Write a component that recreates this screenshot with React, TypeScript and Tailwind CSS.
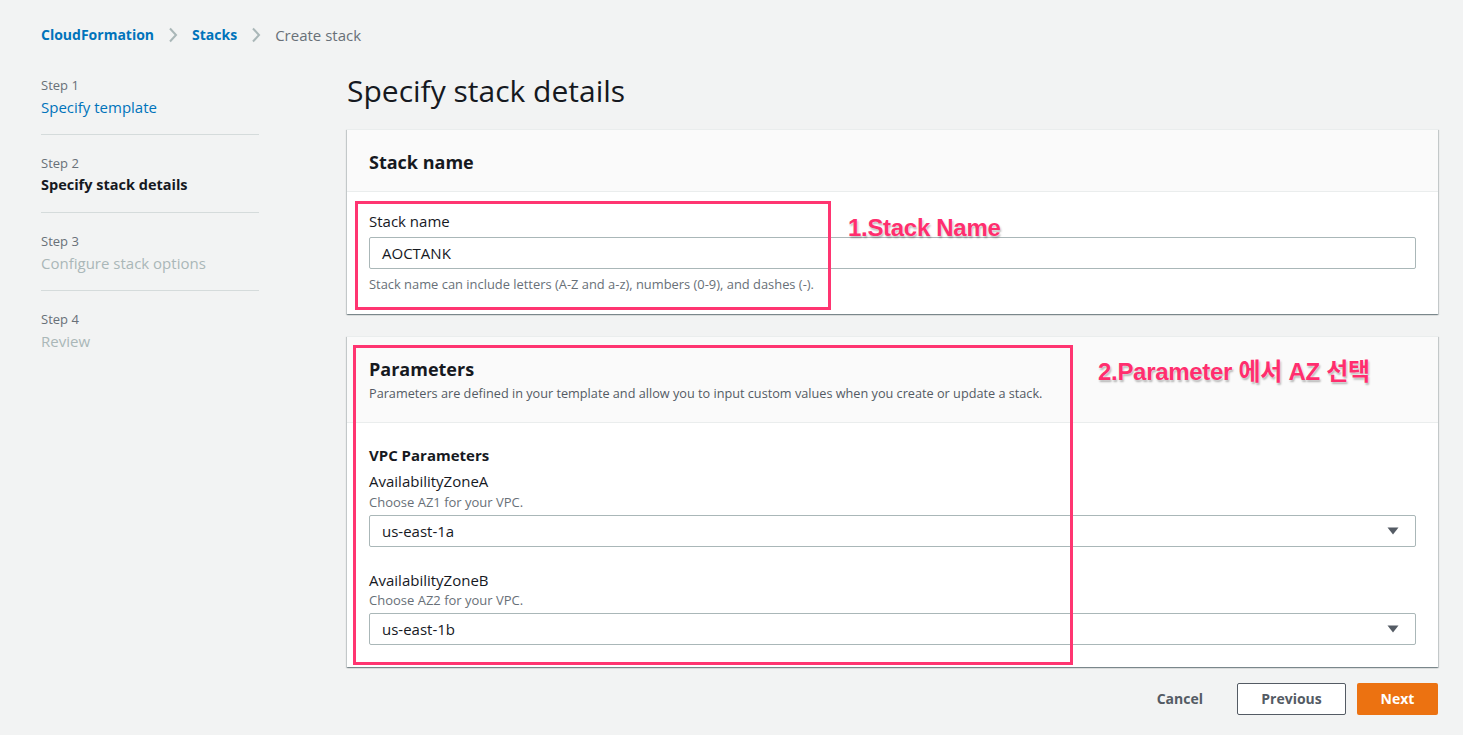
const font = "font-['Open_Sans','Noto_Sans_CJK_KR',sans-serif]"

const steps = [
  { step: 'Step 1', title: 'Specify template', state: 'done' },
  { step: 'Step 2', title: 'Specify stack details', state: 'current' },
  { step: 'Step 3', title: 'Configure stack options', state: 'todo' },
  { step: 'Step 4', title: 'Review', state: 'todo' },
]

function Annotation({ children, className }: { children: React.ReactNode; className: string }) {
  return (
    <div
      className={`absolute whitespace-nowrap font-['Liberation_Sans','Noto_Sans_CJK_KR',sans-serif] text-[24px] font-bold leading-[28px] tracking-[-0.3px] text-[#ff2e6e] [text-shadow:0_0_2px_#fff,1px_2px_2px_rgba(0,0,0,0.3)] ${className}`}
    >
      {children}
    </div>
  )
}

function Crumb() {
  return (
    <svg width="10" height="16" viewBox="0 0 10 16" className="mx-[14px] shrink-0">
      <path d="M2 1.5l6 6.5-6 6.5" fill="none" stroke="#aab7b8" strokeWidth="2" />
    </svg>
  )
}

function Caret() {
  return (
    <svg width="12" height="8" viewBox="0 0 12 8" className="shrink-0">
      <path d="M0.5 0.5h11L6 7.5z" fill="#545b64" />
    </svg>
  )
}

function SelectBox({ value }: { value: string }) {
  return (
    <div className="mt-[5px] flex h-8 items-center justify-between rounded-[2px] border border-[#aab7b8] bg-white pl-3 pr-4 text-[15px] text-[#16191f]">
      <span>{value}</span>
      <Caret />
    </div>
  )
}

function Card({ children }: { children: React.ReactNode }) {
  return (
    <div className="relative border-t border-[#eaeded] bg-white shadow-[0_1px_1px_0_rgba(0,28,36,0.3),1px_1px_1px_0_rgba(0,28,36,0.15),-1px_1px_1px_0_rgba(0,28,36,0.15)]">
      {children}
    </div>
  )
}

export default function App() {
  return (
    <div className={`min-h-screen bg-[#f2f3f3] pl-[41px] pr-[25px] pt-[25px] text-[#16191f] ${font}`}>
      <nav className="flex h-5 items-center text-sm leading-5">
        <span className="font-bold text-[#0073bb]">CloudFormation</span>
        <Crumb />
        <span className="font-bold text-[#0073bb]">Stacks</span>
        <Crumb />
        <span className="text-[15px] text-[#687078]">Create stack</span>
      </nav>

      <div className="mt-[28px] flex gap-[88px]">
        <aside className="w-[218px] shrink-0 pt-1">
          {steps.map((s, i) => (
            <div
              key={s.step}
              className={`${i > 0 ? 'pt-5' : ''} ${i < steps.length - 1 ? 'border-b border-[#d5dbdb] pb-[17px]' : ''}`}
            >
              <div className="text-[13px] leading-4 text-[#687078]">{s.step}</div>
              <div
                className={`mt-1 leading-5 ${
                  s.state === 'done'
                    ? 'text-[15px] text-[#0073bb]'
                    : s.state === 'current'
                      ? 'text-[14.5px] font-bold text-[#16191f]'
                      : 'text-[15px] text-[#aab7b8]'
                }`}
              >
                {s.title}
              </div>
            </div>
          ))}
        </aside>

        <main className="flex-1">
          <h1 className="text-[30px] font-normal leading-9 text-[#16191f]">Specify stack details</h1>

          <div className="mt-5">
            <Card>
              <div className="border-b border-[#eaeded] bg-[#fafafa] px-[22px] pb-[18px] pt-[21px]">
                <h2 className="text-lg font-bold leading-[22px]">Stack name</h2>
              </div>
              <div className="px-[22px] pb-[22px] pt-[19px]">
                <div className="text-[15px] leading-5">Stack name</div>
                <div className="mt-[6px] flex h-8 items-center rounded-[2px] border border-[#aab7b8] bg-white px-3 text-[15px]">
                  AOCTANK
                </div>
                <div className="mt-[7px] text-[12.9px] leading-4 text-[#687078]">
                  Stack name can include letters (A-Z and a-z), numbers (0-9), and dashes (-).
                </div>
              </div>
              <div className="absolute left-[8px] top-[71px] h-[109px] w-[476px] border-[3px] border-[#ff3571]" />
              <Annotation className="left-[501px] top-[84px]">1.Stack Name</Annotation>
            </Card>
          </div>

          <div className="mt-[22px]">
            <Card>
              <div className="border-b border-[#eaeded] bg-[#fafafa] px-[22px] pb-[21px] pt-[21px]">
                <h2 className="text-lg font-bold leading-[22px]">Parameters</h2>
                <p className="mt-[5px] text-[12.7px] leading-4 text-[#545b64]">
                  Parameters are defined in your template and allow you to input custom values when you create or
                  update a stack.
                </p>
              </div>
              <div className="px-[22px] pb-[22px] pt-[22px]">
                <h3 className="text-[15px] font-bold leading-5">VPC Parameters</h3>
                <div className="mt-[6px] text-[15px] leading-5">AvailabilityZoneA</div>
                <div className="mt-[3px] text-[13px] leading-4 text-[#687078]">Choose AZ1 for your VPC.</div>
                <SelectBox value="us-east-1a" />
                <div className="mt-[23px] text-[15px] leading-5">AvailabilityZoneB</div>
                <div className="mt-[2px] text-[13px] leading-4 text-[#687078]">Choose AZ2 for your VPC.</div>
                <SelectBox value="us-east-1b" />
              </div>
              <div className="absolute left-[6px] top-[8px] h-[320px] w-[720px] border-[3px] border-[#ff3571]" />
              <Annotation className="left-[751px] top-[21px]">2.Parameter 에서 AZ 선택</Annotation>
            </Card>
          </div>

          <div className="mt-4 flex items-center justify-end">
            <button type="button" className="h-8 px-5 text-sm font-bold text-[#545b64]">
              Cancel
            </button>
            <button
              type="button"
              className="ml-[14px] h-8 w-[109px] rounded-[2px] border border-[#545b64] bg-white text-sm font-bold text-[#545b64]"
            >
              Previous
            </button>
            <button
              type="button"
              className="ml-[11px] h-8 w-[81px] rounded-[2px] bg-[#ec7211] text-sm font-bold text-white"
            >
              Next
            </button>
          </div>
        </main>
      </div>
    </div>
  )
}
